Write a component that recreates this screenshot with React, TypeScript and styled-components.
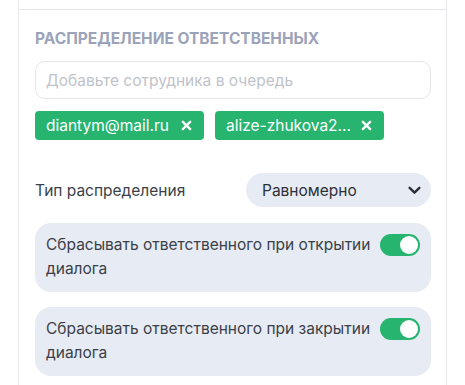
import { createGlobalStyle } from "styled-components";
import styled from "styled-components";

const GlobalStyle = createGlobalStyle`
  html, body {
    margin: 0;
    padding: 0;
    background: #ffffff;
    font-family: Inter, "Noto Sans", sans-serif;
  }
`;

const assignees = ["diantym@mail.ru", "alize-zhukova2..."];

const toggles = [
  { label: "Сбрасывать ответственного при открытии диалога", on: true },
  { label: "Сбрасывать ответственного при закрытии диалога", on: true },
];

export default function App() {
  return (
    <>
      <GlobalStyle />
      <Panel>
        <TopStrip />
        <Section>
          <Title>Распределение ответственных</Title>
          <Input placeholder="Добавьте сотрудника в очередь" />
          <Chips>
            {assignees.map((a) => (
              <Chip key={a}>
                <span>{a}</span>
                <CloseIcon viewBox="0 0 12 12">
                  <path d="M2 2 L10 10 M10 2 L2 10" />
                </CloseIcon>
              </Chip>
            ))}
          </Chips>
          <Row>
            <Label>Тип распределения</Label>
            <Select>
              <span>Равномерно</span>
              <ChevronIcon viewBox="0 0 12 12">
                <path d="M1.5 3.5 L6 8 L10.5 3.5" />
              </ChevronIcon>
            </Select>
          </Row>
          {toggles.map((t) => (
            <ToggleCard key={t.label}>
              <ToggleText>{t.label}</ToggleText>
              <Switch $on={t.on}>
                <Knob $on={t.on} />
              </Switch>
            </ToggleCard>
          ))}
        </Section>
      </Panel>
    </>
  );
}

const Panel = styled.div`
  margin-left: 18px;
  width: 429px;
  height: 385px;
  border-left: 1px solid #e8e9ef;
  border-right: 1px solid #e8e9ef;
  box-sizing: border-box;
  display: flex;
  flex-direction: column;
`;

const TopStrip = styled.div`
  height: 9px;
  border-bottom: 1px solid #e3e5eb;
`;

const Section = styled.div`
  padding: 21px 15px 0 16px;
  display: flex;
  flex-direction: column;
`;

const Title = styled.h3`
  margin: 0;
  font-size: 15.5px;
  font-weight: 700;
  text-transform: uppercase;
  color: #9ba3b9;
  line-height: 16px;
`;

const Input = styled.input`
  margin-top: 14px;
  height: 38px;
  box-sizing: border-box;
  border: 1px solid #e4e6eb;
  border-radius: 10px;
  padding: 0 10px;
  font-family: inherit;
  font-size: 15.5px;
  outline: none;
  &::placeholder {
    color: #bfc3ca;
  }
`;

const Chips = styled.div`
  margin-top: 12px;
  display: flex;
  gap: 11px;
`;

const Chip = styled.div`
  height: 29px;
  width: 169px;
  box-sizing: border-box;
  padding: 0 11px 0 11px;
  display: flex;
  align-items: center;
  justify-content: space-between;
  background: #26b46f;
  border-radius: 4px;
  color: #ffffff;
  font-size: 15.5px;
`;

const CloseIcon = styled.svg`
  width: 11px;
  height: 11px;
  margin-right: 1px;
  stroke: #ffffff;
  stroke-width: 2.6;
  stroke-linecap: round;
  fill: none;
`;

const Row = styled.div`
  margin-top: 33px;
  display: flex;
  align-items: center;
  justify-content: space-between;
`;

const Label = styled.span`
  font-size: 15.5px;
  color: #3b3f48;
`;

const Select = styled.div`
  width: 185px;
  height: 34px;
  box-sizing: border-box;
  border-radius: 17px;
  background: #e7ebf3;
  padding: 0 10px 0 16px;
  display: flex;
  align-items: center;
  justify-content: space-between;
  font-size: 15.5px;
  color: #2d3038;
`;

const ChevronIcon = styled.svg`
  width: 13px;
  height: 13px;
  stroke: #2d3038;
  stroke-width: 2.2;
  stroke-linecap: round;
  stroke-linejoin: round;
  fill: none;
`;

const ToggleCard = styled.div`
  margin-top: 16px;
  min-height: 69px;
  box-sizing: border-box;
  border-radius: 16px;
  background: #e7ebf3;
  padding: 10px 11px 10px 11px;
  display: flex;
  gap: 4px;
  align-items: flex-start;
  justify-content: space-between;
  & + & {
    margin-top: 15px;
  }
`;

const ToggleText = styled.span`
  flex: 1;
  font-size: 15.5px;
  line-height: 24px;
  color: #3b3f48;
`;

const Switch = styled.div<{ $on: boolean }>`
  flex-shrink: 0;
  width: 40px;
  height: 22px;
  margin-top: 1px;
  border-radius: 11px;
  background: ${(p) => (p.$on ? "#26b46f" : "#c8ccd4")};
  display: flex;
  align-items: center;
  padding: 0 2px;
  box-sizing: border-box;
  justify-content: ${(p) => (p.$on ? "flex-end" : "flex-start")};
`;

const Knob = styled.div<{ $on: boolean }>`
  width: 18px;
  height: 18px;
  border-radius: 50%;
  background: #ffffff;
`;
